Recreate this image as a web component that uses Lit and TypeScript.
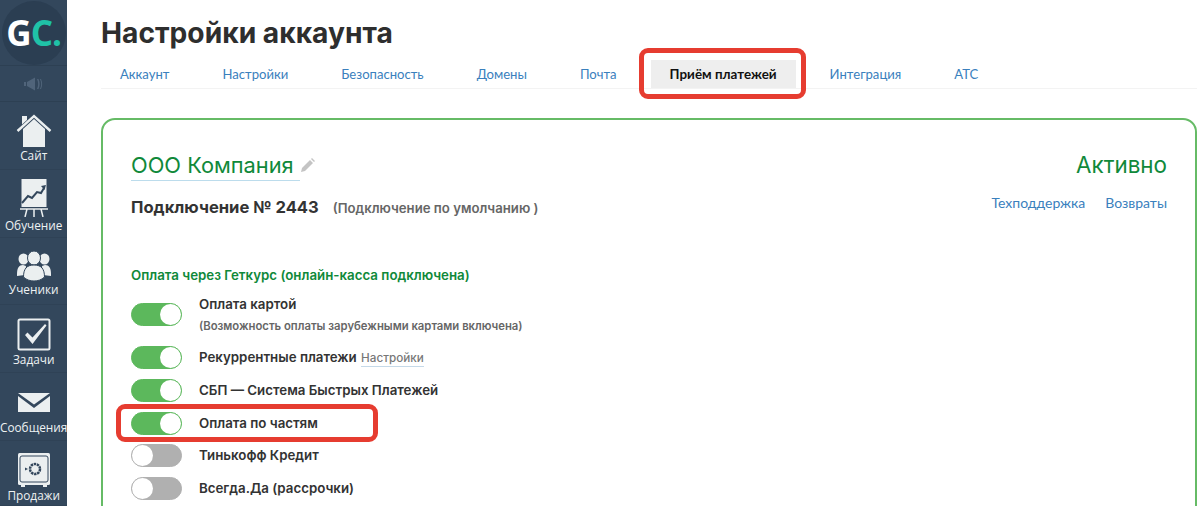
import { LitElement, html, css, svg } from 'lit';
import { customElement } from 'lit/decorators.js';
import { classMap } from 'lit/directives/class-map.js';

const ICONS = {
  home: svg`<svg width="36" height="33" viewBox="0 0 36 33">
    <path fill="#ebeff0" d="M7 15 18 5l11 10v18H7z"/>
    <path fill="#ebeff0" d="M6 2h5v4l-5 4.500z"/>
    <path fill="none" stroke="#ebeff0" stroke-width="2.400" d="M1.500 17 18 2l16.500 15"/>
  </svg>`,
  board: svg`<svg width="36" height="38" viewBox="0 0 36 38">
    <path fill="#ebeff0" d="M5.500 0h25v28h-25z"/>
    <path fill="none" stroke="#33475c" stroke-width="2" d="M6 24l6-7 4 2 5-6 4 1 3-5"/>
    <path fill="#33475c" d="M30 6l-5 1 3.500 4z"/>
    <path fill="none" stroke="#ebeff0" stroke-width="1.500" d="M4 30h28M11 30l-2 8M18 30v8M25 30l2 8"/>
  </svg>`,
  users: svg`<svg width="36" height="30" viewBox="0 0 36 30">
    <ellipse cx="7.500" cy="8" rx="5" ry="5.500" fill="#ebeff0"/>
    <ellipse cx="28.500" cy="8" rx="5" ry="5.500" fill="#ebeff0"/>
    <path fill="#ebeff0" d="M1 23c0-6 2-9 6-9l3 1-1 9-8 1zM35 23c0-6-2-9-6-9l-3 1 1 9 8 1z"/>
    <ellipse cx="18" cy="7" rx="6.500" ry="7" fill="#ebeff0" stroke="#33475c"/>
    <path fill="#ebeff0" stroke="#33475c" d="M7.500 26c0-8 3-12 10.500-12s10.500 4 10.500 12c-3 3-7 4-10.500 4s-7.500-1-10.500-4z"/>
  </svg>`,
  check: svg`<svg width="36" height="33" viewBox="0 0 36 33">
    <rect x="2.500" y="1.500" width="31" height="30" rx="1.500" fill="none" stroke="#ebeff0" stroke-width="2"/>
    <path fill="#ebeff0" d="M9 17l2.500-2.500 5 5L29 6l1.500 1.500L16.500 26z"/>
  </svg>`,
  mail: svg`<svg width="36" height="30" viewBox="0 0 36 30">
    <path fill="#ebeff0" d="M2 4h32L18 15.500zM2 7l16 12L34 7v16H2z"/>
  </svg>`,
  safe: svg`<svg width="36" height="34" viewBox="0 0 36 34">
    <rect x="2" y="0" width="32" height="32" rx="1.500" fill="#ebeff0"/>
    <rect x="4" y="3" width="28" height="26" rx="2" fill="none" stroke="#33475c" stroke-width="1"/>
    <path fill="#ebeff0" d="M5 32h4v2H5zM27 32h4v2h-4z"/>
    <circle cx="19" cy="16" r="5" fill="none" stroke="#33475c" stroke-width="2.500" stroke-dasharray="2.400 .7"/>
    <path fill="#33475c" d="M9 14.500l3 1.500-3 1.500z"/>
  </svg>`,
};

const NAV = [
  { label: 'Сайт', icon: ICONS.home, pad: 12 },
  { label: 'Обучение', icon: ICONS.board, pad: 9 },
  { label: 'Ученики', icon: ICONS.users, pad: 13 },
  { label: 'Задачи', icon: ICONS.check, pad: 13 },
  { label: 'Сообщения', icon: ICONS.mail, pad: 16 },
  { label: 'Продажи', icon: ICONS.safe, pad: 12 },
];

const TABS = ['Аккаунт', 'Настройки', 'Безопасность', 'Домены', 'Почта', 'Приём платежей', 'Интеграция', 'АТС'];

@customElement('app-root')
export class AppRoot extends LitElement {
  static styles = css`
    :host {
      display: flex;
      height: 506px;
      overflow: hidden;
      position: relative;
      background: #fff;
      font-family: 'Inter', sans-serif;
    }

    .side {
      width: 67px;
      flex: none;
      background: #33475c;
      display: grid;
      grid-template-rows: 66px 36px 68px 68px 67px 68px 68px 65px;
    }

    .logo-wrap {
      border-bottom: 1px solid #2d4053;
      display: flex;
      justify-content: center;
      padding-top: 1px;
    }

    .logo {
      width: 64px;
      height: 64px;
      border-radius: 50%;
      background: #2b3e52;
      font: 700 35px/64px 'Open Sans', sans-serif;
      letter-spacing: -1px;
      text-align: center;
      color: #fff;
      white-space: nowrap;
    }

    .logo span {
      color: #1fc2a7;
    }

    .mute {
      border-bottom: 1px solid #2d4053;
      display: flex;
      align-items: center;
      justify-content: center;
    }

    .nav-item {
      display: flex;
      flex-direction: column;
      align-items: center;
      border-bottom: 1px solid #2f4256;
      color: #eef2f3;
      font: 400 11.8px/16px 'Open Sans', sans-serif;
      white-space: nowrap;
      box-sizing: border-box;
    }

    .nav-item svg {
      display: block;
      flex: none;
    }

    .main {
      flex: 1;
      min-width: 0;
      padding: 0 3px 0 34px;
    }

    h1 {
      margin: 0;
      padding-top: 15px;
      font: 700 28.200px/36px 'Inter', sans-serif;
      color: #2e2e2e;
    }

    .tabs {
      display: flex;
      gap: 15px;
      margin-top: 9px;
      height: 28px;
      border-bottom: 1px solid #f3f3f3;
    }

    .tab {
      padding: 0 19px;
      font: 400 13.100px/28px 'Lato', sans-serif;
      color: #3a80bd;
      white-space: nowrap;
    }

    .tab.active {
      background: #eeeeee;
      color: #111;
      font-size: 13.400px;
      font-weight: 700;
    }

    .card {
      margin-top: 29px;
      border: 2px solid #66bb66;
      border-radius: 14px;
      padding: 30px 28px;
      height: 500px;
      box-sizing: border-box;
    }

    .head {
      display: flex;
      justify-content: space-between;
      align-items: flex-start;
    }

    .company {
      display: flex;
      align-items: center;
      font-size: 21.800px;
      line-height: 30px;
      color: #10893a;
    }

    .company span {
      border-bottom: 1px solid #bcdcec;
      padding: 0 6px 0 0;
    }

    .status {
      font-size: 22.400px;
      line-height: 30px;
      color: #10893a;
    }

    .conn-row {
      display: flex;
      justify-content: space-between;
      align-items: flex-start;
      margin-top: 14px;
    }

    .conn {
      font-size: 16.600px;
      font-weight: 700;
      line-height: 24px;
      color: #333;
    }

    .conn small {
      font-size: 13.200px;
      font-weight: 600;
      color: #666;
      margin-left: 10px;
    }

    .links {
      display: flex;
      gap: 20px;
      margin-top: -2px;
      font: 400 14px/20px 'Lato', sans-serif;
      color: #3a80bd;
    }

    h2 {
      margin: 45px 0 0;
      font-size: 13.300px;
      font-weight: 600;
      line-height: 20px;
      color: #10893a;
    }

    .rows {
      margin-top: 8px;
      display: flex;
      flex-direction: column;
      gap: 9.500px;
    }

    .row {
      display: flex;
      align-items: center;
      gap: 17px;
    }

    .toggle {
      flex: none;
      width: 51px;
      height: 23px;
      border-radius: 12px;
      box-sizing: border-box;
      background: #5cb85c;
      border: 1px solid #5cb85c;
      display: flex;
      justify-content: flex-end;
    }

    .toggle::after {
      content: '';
      width: 21px;
      height: 21px;
      border-radius: 50%;
      background: #fff;
    }

    .toggle.off {
      background: #b0b0b0;
      border-color: #b0b0b0;
      justify-content: flex-start;
    }

    .label {
      font-size: 13.300px;
      font-weight: 600;
      line-height: 23px;
      color: #333;
    }

    .hint {
      font-size: 11.300px;
      font-weight: 600;
      line-height: 16px;
      margin-top: 2px;
      padding-bottom: 2px;
      color: #666;
    }

    .set {
      margin-left: 1px;
      font-size: 11.700px;
      font-weight: 500;
      color: #777;
      border-bottom: 1px solid #c5d9e8;
      padding-bottom: 1px;
    }

    .mark {
      position: absolute;
      box-sizing: border-box;
      border: 5px solid #e63c30;
      border-radius: 9px;
    }

    .mark.tab-mark {
      left: 639px;
      top: 48px;
      width: 167px;
      height: 51px;
    }

    .mark.row-mark {
      left: 116px;
      top: 404px;
      width: 262px;
      height: 38px;
    }
  `;

  private toggleRow(label: unknown, on = true, hint = '') {
    return html`
      <div class="row">
        <div class=${classMap({ toggle: true, off: !on })}></div>
        <div>
          <div class="label">${label}</div>
          ${hint ? html`<div class="hint">${hint}</div>` : ''}
        </div>
      </div>
    `;
  }

  render() {
    return html`
      <aside class="side">
        <div class="logo-wrap"><div class="logo">G<span>C.</span></div></div>
        <div class="mute">
          <svg width="22" height="14" viewBox="0 0 22 14">
            <path fill="#50647a" d="M1 5h2v4H1zM4 5l8-4.500v13L4 9zM14 2c1.500 3 1.500 7 0 10h1.500c1.500-3 1.500-7 0-10zM17 2c1.500 3 1.500 7 0 10h1c1.500-3 1.500-7 0-10z"/>
          </svg>
        </div>
        ${NAV.map(
          (n) => html`
            <div class="nav-item" style="padding-top:${n.pad}px">${n.icon}<span>${n.label}</span></div>
          `
        )}
      </aside>

      <div class="main">
        <h1>Настройки аккаунта</h1>
        <div class="tabs">
          ${TABS.map(
            (t, i) => html`<div class=${classMap({ tab: true, active: i === 5 })}>${t}</div>`
          )}
        </div>

        <div class="card">
          <div class="head">
            <div class="company">
              <span>ООО Компания</span>
              <svg width="15" height="15" viewBox="0 0 15 15">
                <path fill="#c4c4c4" d="M1 14l1-4 8-8 3 3-8 8zM11 1l1-1 3 3-1 1z"/>
              </svg>
            </div>
            <div class="status">Активно</div>
          </div>

          <div class="conn-row">
            <div class="conn">Подключение № 2443 <small>(Подключение по умолчанию )</small></div>
            <div class="links"><span>Техподдержка</span><span>Возвраты</span></div>
          </div>

          <h2>Оплата через Геткурс (онлайн-касса подключена)</h2>

          <div class="rows">
            ${this.toggleRow('Оплата картой', true, '(Возможность оплаты зарубежными картами включена)')}
            ${this.toggleRow(html`Рекуррентные платежи <span class="set">Настройки</span>`)}
            ${this.toggleRow('СБП — Система Быстрых Платежей')}
            ${this.toggleRow('Оплата по частям')}
            ${this.toggleRow('Тинькофф Кредит', false)}
            ${this.toggleRow('Всегда.Да (рассрочки)', false)}
          </div>
        </div>
      </div>

      <div class="mark tab-mark"></div>
      <div class="mark row-mark"></div>
    `;
  }
}
